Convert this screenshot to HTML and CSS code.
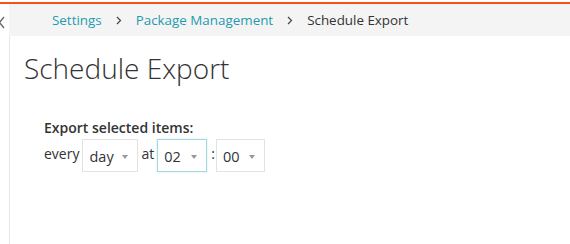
FILE: index.html
```html
<!DOCTYPE html>
<html lang="en">

<head>
    <meta charset="UTF-8">
    <title>Schedule Export</title>
    <link rel="stylesheet" href="styles.css">
</head>

<body>

    <div class="page">
        <div class="sidebar">
            <svg class="collapse" width="9" height="34" viewBox="0 0 9 34">
                <polyline points="4,13 -0.5,18.5 4,24" fill="none" stroke="#666" stroke-width="1.3"/>
            </svg>
        </div>

        <div class="main">
            <div class="breadcrumb">
                <a href="#">Settings</a>
                <svg class="sep" width="6" height="9" viewBox="0 0 6 9"><polyline points="1,1 4.5,4.5 1,8" fill="none" stroke="#444" stroke-width="1.2"/></svg>
                <a href="#">Package Management</a>
                <svg class="sep" width="6" height="9" viewBox="0 0 6 9"><polyline points="1,1 4.5,4.5 1,8" fill="none" stroke="#444" stroke-width="1.2"/></svg>
                <span class="current">Schedule Export</span>
            </div>

            <div class="content">
                <h1>Schedule Export</h1>

                <div class="export-form">
                    <label class="form-label">Export selected items:</label>
                    <div class="form-row">
                        <span>every</span>
                        <div class="select">day<span class="caret"></span></div>
                        <span>at</span>
                        <div class="select active">02<span class="caret"></span></div>
                        <span class="colon">:</span>
                        <div class="select">00<span class="caret"></span></div>
                    </div>
                </div>
            </div>
        </div>
    </div>

</body>

</html>
```

FILE: styles.css
```css
body {
    font-family: "Open Sans", Arial, sans-serif;
    margin: 0;
    padding: 0;
    color: #333;
    background-color: #fff;
}

.page {
    display: flex;
    margin-top: 2px;
    border-top: 2px solid #f4511e;
    height: 240px;
}

/* Sidebar */
.sidebar {
    width: 9px;
    flex-shrink: 0;
}

.collapse {
    display: block;
}

.main {
    flex: 1;
    display: flex;
    flex-direction: column;
}

/* Breadcrumb */
.breadcrumb {
    display: flex;
    align-items: center;
    height: 32px;
    background-color: #f4f4f4;
    padding-left: 43px;
    font-size: 13.4px;
}

.breadcrumb a {
    color: #1f9bb0;
    text-decoration: none;
}

.breadcrumb .sep {
    margin: 0 14px 0 14px;
}

.breadcrumb .current {
    color: #333;
}

/* Content */
.content {
    flex: 1;
    border-left: 1px solid #e6e6e6;
    padding-left: 14px;
}

.content h1 {
    font-weight: 300;
    font-size: 28px;
    margin: 13px 0 0 0;
    color: #333;
}

.export-form {
    margin: 32px 0 0 20px;
    font-size: 14px;
}

.form-label {
    display: block;
    font-weight: 600;
    line-height: 18px;
}

.form-row {
    display: flex;
    align-items: center;
    margin-top: 2px;
    font-size: 14px;
}

.form-row > span {
    margin-right: 3px;
    position: relative;
    top: -2px;
}

.form-row .colon {
    margin: 0 1px 0 1px;
}

.select {
    position: relative;
    box-sizing: border-box;
    height: 33px;
    width: 56px;
    border: 1px solid #e3e3e3;
    padding: 7px 0 0 6px;
    font-size: 14.5px;
    margin-right: 3px;
}

.select.active {
    width: 50px;
    border-color: #a9d7df;
    box-shadow: 0 0 2px #c8e8ee;
}

.select:last-child {
    width: 49px;
}

.caret {
    position: absolute;
    right: 9px;
    top: 15px;
    border-left: 3.5px solid transparent;
    border-right: 3.5px solid transparent;
    border-top: 4px solid #999;
}
```
